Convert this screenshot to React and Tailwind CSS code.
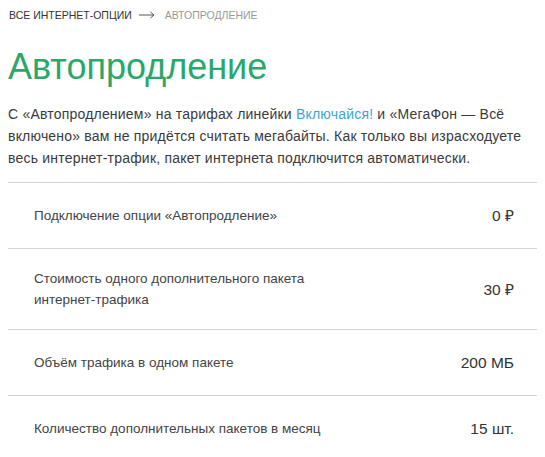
const rows = [
  { label: "Подключение опции «Автопродление»", value: "0 ₽" },
  { label: ["Стоимость одного дополнительного пакета", "интернет-трафика"], value: "30 ₽" },
  { label: "Объём трафика в одном пакете", value: "200 МБ" },
  { label: "Количество дополнительных пакетов в месяц", value: "15 шт." },
];

const App = () => {
  return (
    <div className="min-h-screen bg-white px-2 pt-[9px] font-['Liberation_Sans',Arial,sans-serif] text-[#333]">
      <nav className="flex items-center pl-[1px] text-[10.5px] uppercase leading-[12px]">
        <span className="text-[#333]">Все интернет-опции</span>
        <svg className="ml-[7px] mr-[10px]" width="16" height="8" viewBox="0 0 16 8" fill="none">
          <path d="M0 4h15M11.5 1l3.5 3-3.5 3" stroke="#555" strokeWidth="1" />
        </svg>
        <span className="text-[#999]">Автопродление</span>
      </nav>

      <h1 className="mt-[26px] text-[36px] leading-[40px] text-[#2aa86a]">Автопродление</h1>

      <p className="mt-[16px] text-[14px] leading-[22px] tracking-[0.2px] text-[#3a3a3a]">
        С «Автопродлением» на тарифах линейки{" "}
        <span className="text-[#3ea4cf]">Включайся!</span> и «МегаФон — Всё включено» вам не придётся
        считать мегабайты. Как только вы израсходуете весь интернет-трафик, пакет интернета подключится
        автоматически.
      </p>

      <div className="mt-[13px]">
        {rows.map((row, i) => (
          <div
            key={i}
            className="flex min-h-[66px] items-center justify-between border-t border-[#d6d6d6] py-[19px] pl-[26px] pr-[23px] text-[13.5px] leading-[21px]"
          >
            <div className="text-[#444]">
              {Array.isArray(row.label)
                ? row.label.map((l) => <div key={l}>{l}</div>)
                : row.label}
            </div>
            <div className="text-[15.5px] text-[#333]">{row.value}</div>
          </div>
        ))}
      </div>
    </div>
  );
};

export default App;
